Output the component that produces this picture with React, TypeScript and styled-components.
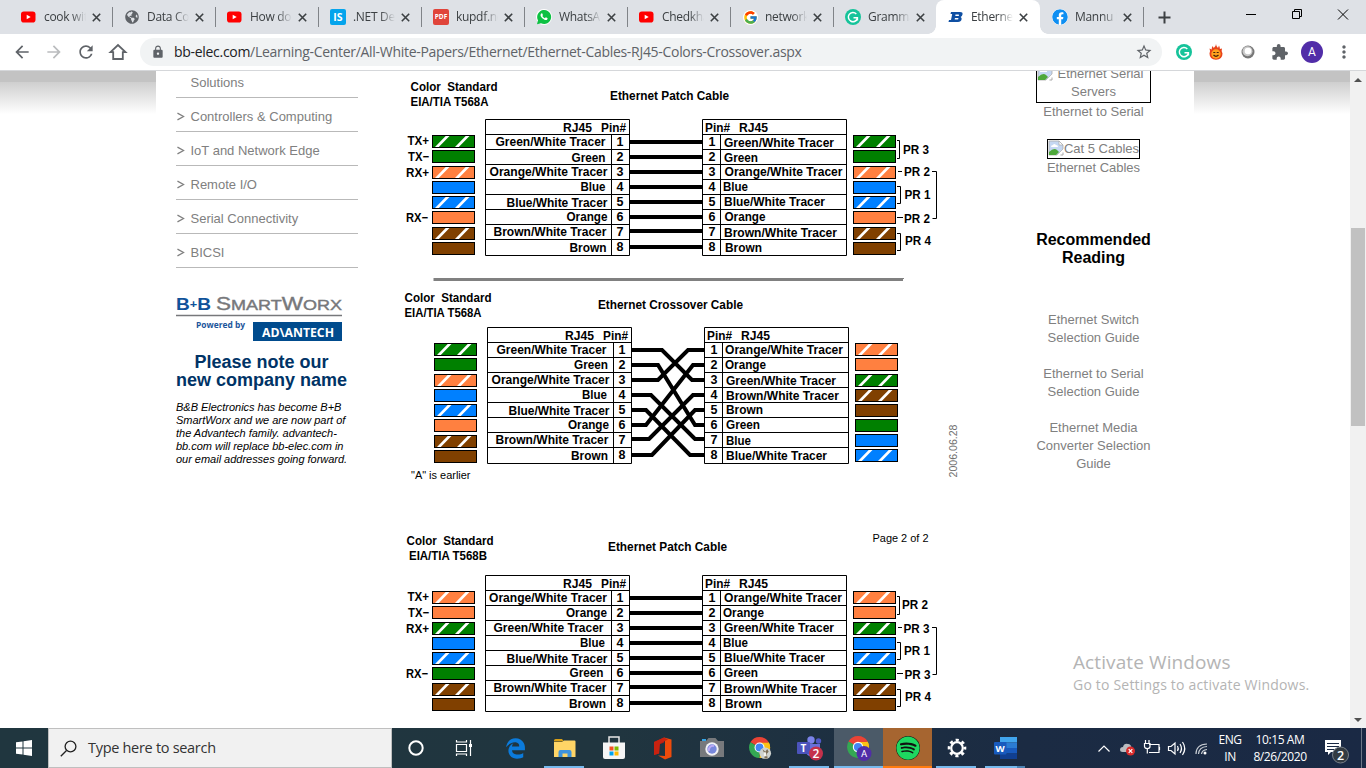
import React from "react";
import styled, { createGlobalStyle, css } from "styled-components";
import { MdLock, MdStarBorder, MdRefresh, MdArrowBack, MdArrowForward, MdMoreVert } from "react-icons/md";
import { FaFacebook, FaEdgeLegacy, FaSpotify, FaGlobeAmericas } from "react-icons/fa";
import { FcGoogle } from "react-icons/fc";

const Global = createGlobalStyle`
  * { box-sizing: border-box; }
  body { margin: 0; overflow: hidden; }
`;

const UI = `"Open Sans", "Noto Sans", sans-serif`;
const ARIAL = `"Liberation Sans", Arial, sans-serif`;

const Screen = styled.div`
  width: 1366px;
  height: 768px;
  display: flex;
  flex-direction: column;
  background: #fff;
  overflow: hidden;
  position: relative;
`;

/* ---------- browser tabs ---------- */

const TabStrip = styled.div`
  height: 34px;
  flex: none;
  background: #dee1e6;
  display: flex;
  padding-left: 9px;
`;

const TabItem = styled.div<{ $active?: boolean; $line?: boolean }>`
  width: 103px;
  height: 34px;
  flex: none;
  display: flex;
  align-items: center;
  padding: 0 0 0 12px;
  position: relative;
  ${(p) =>
    p.$active &&
    css`
      background: #fff;
      border-radius: 8px 8px 0 0;
      width: 104px;
      &::before,
      &::after {
        content: "";
        position: absolute;
        bottom: 0;
        width: 8px;
        height: 8px;
      }
      &::before {
        left: -8px;
        background: radial-gradient(circle at 0 0, transparent 7.5px, #fff 8px);
      }
      &::after {
        right: -8px;
        background: radial-gradient(circle at 100% 0, transparent 7.5px, #fff 8px);
      }
    `}
  ${(p) =>
    p.$line &&
    css`
      &::after {
        content: "";
        position: absolute;
        right: -1px;
        top: 7px;
        width: 1px;
        height: 20px;
        background: #808388;
      }
    `}
`;

const Favicon = styled.span`
  width: 16px;
  height: 16px;
  display: flex;
  align-items: center;
  justify-content: center;
  margin-right: 7px;
  flex: none;
`;

const TabTitle = styled.span`
  width: 42px;
  overflow: hidden;
  white-space: nowrap;
  font: 12px/18px ${UI};
  letter-spacing: -0.3px;
  color: #3c4043;
  mask-image: linear-gradient(90deg, #000 65%, transparent 100%);
`;

const CloseMark = styled.svg`
  width: 9px;
  height: 9px;
  margin-left: 6px;
  flex: none;
`;

const NewTab = styled.svg`
  width: 13px;
  height: 13px;
  margin: 11px 0 0 15px;
`;

const WindowButtons = styled.svg`
  width: 130px;
  height: 34px;
  margin-left: auto;
`;

/* ---------- toolbar ---------- */

const Toolbar = styled.div`
  height: 37px;
  flex: none;
  border-bottom: 1px solid #d5d7da;
  display: flex;
  align-items: center;
  padding-left: 12px;
  color: #5f6368;
`;

const NavButton = styled.span<{ $dim?: boolean }>`
  width: 20px;
  height: 20px;
  margin-right: 12px;
  font-size: 20px;
  display: flex;
  color: ${(p) => (p.$dim ? "#babcbe" : "#5f6368")};
`;

const AddressBar = styled.div`
  width: 1022px;
  height: 28px;
  border-radius: 14px;
  background: #f1f3f4;
  display: flex;
  align-items: center;
  padding: 0 9px 0 11px;
  font-size: 14px;
`;

const Url = styled.span`
  margin-left: 9px;
  font: 14px/20px ${UI};
  letter-spacing: -0.3px;
  color: #5f6368;
  white-space: nowrap;
  b {
    font-weight: 400;
    color: #202124;
  }
`;

const StarSlot = styled.span`
  margin-left: auto;
  font-size: 18px;
  display: flex;
`;

const Extensions = styled.div`
  display: flex;
  align-items: center;
  margin-left: 14px;
  gap: 16px;
`;

const Slot = styled.span`
  width: 16px;
  height: 16px;
  display: flex;
  align-items: center;
  justify-content: center;
  font-size: 18px;
`;

const Avatar = styled.span`
  width: 22px;
  height: 22px;
  margin: 0 -3px 0 -3px;
  border-radius: 50%;
  background: #512da8;
  color: #fff;
  font: 12px/22px Roboto, sans-serif;
  text-align: center;
`;

/* ---------- web page ---------- */

const Viewport = styled.div`
  height: 657px;
  flex: none;
  display: flex;
  overflow: hidden;
`;

const PageEdge = styled.div`
  width: 156px;
  background: linear-gradient(#c3c3c3 0, #c3c3c3 11px, #cfcfcf 11px, #fff 43px);
`;

const PageBody = styled.main`
  width: 1038px;
  display: flex;
  padding-left: 20px;
  font-family: ${ARIAL};
`;

const Sidebar = styled.nav`
  width: 182px;
  margin-right: 42px;
  flex: none;
`;

const MenuRow = styled.div<{ $first?: boolean }>`
  height: ${(p) => (p.$first ? 27 : 34)}px;
  border-bottom: 1px solid #b9b9b9;
  display: flex;
  align-items: flex-end;
  padding: 0 0 5px ${(p) => (p.$first ? 14.5 : 0)}px;
  font-size: 13px;
  line-height: 18px;
  color: #808080;
  svg {
    width: 14.5px;
    height: 18px;
    flex: none;
  }
`;

const Logo = styled.svg`
  display: block;
  width: 167px;
  height: 48px;
  margin-top: 27px;
`;

const Notice = styled.h2`
  margin: 10px 0 0;
  width: 171px;
  font: bold 18px/18px ${ARIAL};
  text-align: center;
  white-space: nowrap;
  color: #003366;
`;

const NoticeText = styled.p`
  margin: 12px 0 0;
  font: italic 11px/13px ${ARIAL};
  letter-spacing: -0.02px;
  color: #000;
  white-space: nowrap;
`;

const Figure = styled.svg`
  width: 560px;
  height: 657px;
  flex: none;
  display: block;
  margin-right: 76px;
`;

const Related = styled.aside`
  width: 115px;
  flex: none;
  font-size: 13px;
  line-height: 18px;
  text-align: center;
  color: #808080;
  p {
    margin: 0;
    white-space: nowrap;
  }
`;

const ClippedTop = styled.div`
  height: 32px;
  display: flex;
  flex-direction: column;
  justify-content: flex-end;
  overflow: hidden;
`;

const MissingImage = styled.span<{ $tight?: boolean }>`
  display: inline-block;
  flex: none;
  border: 1px solid #000;
  white-space: nowrap;
  padding-bottom: ${(p) => (p.$tight ? 0 : 1)}px;
  svg {
    width: 16px;
    height: 16px;
    margin-right: ${(p) => (p.$tight ? 0 : 5)}px;
    margin-left: ${(p) => (p.$tight ? 0 : -7)}px;
    vertical-align: -3px;
  }
`;

const RelatedGap = styled.div<{ $h: number }>`
  height: ${(p) => p.$h}px;
`;

const RelatedTitle = styled.h3`
  margin: 0;
  font: bold 16px/18px ${ARIAL};
  color: #000;
`;

const Scrollbar = styled.div`
  width: 16px;
  background: #f1f1f1;
  display: flex;
  flex-direction: column;
  svg {
    width: 16px;
    height: 17px;
  }
`;

const ScrollThumb = styled.div`
  width: 14px;
  height: 198px;
  margin: 140px 0 auto 1px;
  background: #c1c1c1;
`;

const Watermark = styled.div`
  position: absolute;
  left: 1073px;
  top: 649px;
  font-family: ${UI};
  color: #b4b4b4;
  white-space: nowrap;
`;

const WatermarkTitle = styled.div`
  font-size: 19px;
  line-height: 26px;
  letter-spacing: 0.1px;
`;

const WatermarkText = styled.div`
  font-size: 14px;
  line-height: 20px;
  letter-spacing: 0.2px;
`;

/* ---------- taskbar ---------- */

const Taskbar = styled.div`
  height: 40px;
  flex: none;
  display: flex;
  background: linear-gradient(90deg, #20363f 0, #20353f 45%, #1b2b43 75%, #1a2944 100%);
  color: #fff;
`;

const StartCell = styled.div`
  width: 48px;
  display: flex;
  align-items: center;
  justify-content: center;
`;

const SearchBox = styled.div`
  width: 344px;
  border: 1px solid #bfbfbf;
  background: #f1f1f1;
  display: flex;
  align-items: center;
  padding-left: 11px;
  gap: 11px;
  font: 14.5px/20px ${UI};
  letter-spacing: -0.3px;
  color: #333;
`;

const AppCell = styled.div<{ $bg?: string; $bar?: string; $full?: boolean; $w?: number; $gap?: number }>`
  width: ${(p) => p.$w || 49}px;
  margin-right: ${(p) => p.$gap || 0}px;
  display: flex;
  align-items: center;
  justify-content: center;
  position: relative;
  background: ${(p) => p.$bg || "transparent"};
  &::after {
    content: "";
    position: absolute;
    bottom: 0;
    left: ${(p) => (p.$full ? 0 : 4)}px;
    right: ${(p) => (p.$full ? 0 : 5)}px;
    height: 2px;
    background: ${(p) => p.$bar || "transparent"};
  }
`;

const Tray = styled.svg`
  width: 118px;
  height: 40px;
  margin-left: auto;
`;

const Stack = styled.div<{ $w: number }>`
  width: ${(p) => p.$w}px;
  text-align: center;
  font: 12px/17px ${UI};
  letter-spacing: -0.4px;
  padding-top: 3px;
  white-space: nowrap;
`;

const ActionCenter = styled.svg`
  width: 53px;
  height: 40px;
`;

/* ---------- wiring diagrams ---------- */

const palette: Record<string, string> = {
  Green: "#008000",
  Orange: "#ff8040",
  Blue: "#0080ff",
  Brown: "#804000",
};

const lengths: Record<string, number> = {
  "Green/White Tracer": 110,
  Green: 34,
  "Orange/White Tracer": 118,
  Orange: 41,
  "Blue/White Tracer": 101,
  Blue: 25,
  "Brown/White Tracer": 113,
  Brown: 37,
};

type Pin = [label: string, x: number, baseline: number];

const Fit = ({ x, y, w, children, end }: { x: number; y: number; w: number; children: string; end?: boolean }) => (
  <text x={(end ? x - w : x) - 0.5} y={y} textLength={w} lengthAdjust="spacingAndGlyphs" xmlSpace="preserve">
    {children}
  </text>
);

const swatchY = [135.5, 150.5, 166.5, 181.5, 196.5, 211.5, 227.5, 242.5];
const wireY = [142, 157, 172, 187, 202, 217, 231, 247];
const digitY = [146, 161, 176, 191, 206, 221, 236, 251];

const Swatch = ({ x, y, label }: { x: number; y: number; label: string }) => (
  <g>
    <rect x={x} y={y} width={42} height={12} fill={palette[label.split("/")[0]]} stroke="#000" />
    {label.includes("/") && (
      <path
        d={`M${x + 2.5} ${y + 11.5}h3.8l10.700-11h-3.800zM${x + 22.5} ${y + 11.5}h3.800l10.700-11h-3.800z`}
        fill="#fff"
      />
    )}
  </g>
);

const Connector = ({ dx, dy, left, right }: { dx: number; dy: number; left: Pin[]; right: Pin[] }) => (
  <g>
    <g transform={`translate(${dx} ${dy})`}>
      <path
        fill="none"
        stroke="#000"
        d={`M485.5 119.5h144v136h-144zM702.5 119.5h144v136h-144zM611.5 134.5v121M720.5 134.5v121${[0, 1, 2, 3, 4, 5, 6, 7]
          .map((i) => `M485.5 ${134.5 + i * 15}h144M702.5 ${134.5 + i * 15}h144`)
          .join("")}`}
      />
      <Fit x={563.5} y={132} w={29}>RJ45</Fit>
      <Fit x={601.5} y={132} w={25}>Pin#</Fit>
      <Fit x={705.5} y={132} w={25}>Pin#</Fit>
      <Fit x={739.5} y={132} w={29}>RJ45</Fit>
      {digitY.map((y, i) => (
        <g key={i} textAnchor="middle">
          <text x={620} y={y}>{i + 1}</text>
          <text x={712} y={y}>{i + 1}</text>
        </g>
      ))}
      {left.map(([label], i) => (
        <Swatch key={i} x={432.5} y={swatchY[i]} label={label} />
      ))}
      {right.map(([label], i) => (
        <Swatch key={i} x={853.5} y={swatchY[i] - (dx && i > 5 ? 1 : 0)} label={label} />
      ))}
    </g>
    {left.map(([label, x, y], i) => (
      <Fit key={i} x={x} y={y} w={lengths[label]} end>{label}</Fit>
    ))}
    {right.map(([label, x, y], i) => (
      <Fit key={i} x={x} y={y} w={lengths[label]}>{label}</Fit>
    ))}
  </g>
);

const PatchExtras = ({ dy, pairs }: { dy: number; pairs: [string, number, number][] }) => (
  <g transform={`translate(0 ${dy})`}>
    <path stroke="#000" strokeWidth={4} d={wireY.map((y) => `M630 ${y}h72`).join("")} />
    <Fit x={408} y={145} w={21.5}>TX+</Fit>
    <Fit x={408.5} y={161} w={21}>TX−</Fit>
    <Fit x={406.5} y={177} w={23}>RX+</Fit>
    <Fit x={406.5} y={222} w={22}>RX−</Fit>
    {pairs.map(([t, x, y], i) => (
      <Fit key={i} x={x} y={y} w={26}>{t}</Fit>
    ))}
    <path
      fill="none"
      stroke="#000"
      d="M897 140.5h2.5v18h-2.5M897 186.5h3.5v17h-3.5M897 233.5h3.5v17h-3.5M898 171.5h4M897 217.5h6M932 171.5h4.5v47h-4"
    />
  </g>
);

const G = "Green/White Tracer";
const O = "Orange/White Tracer";
const B = "Blue/White Tracer";
const N = "Brown/White Tracer";

const WiringDiagrams = () => (
  <Figure viewBox="400 71 560 657" fontFamily={ARIAL} fontSize={12.5} fontWeight={700}>
    <Fit x={411} y={91} w={87}>{"Color  Standard"}</Fit>
    <Fit x={411} y={106} w={78}>EIA/TIA T568A</Fit>
    <Fit x={610.5} y={100} w={119}>Ethernet Patch Cable</Fit>
    <Connector
      dx={0}
      dy={0}
      left={[[G, 606, 146], ["Green", 606, 162], [O, 608, 176], ["Blue", 606, 191], [B, 608, 207], ["Orange", 608, 221], [N, 607, 236], ["Brown", 607, 252]]}
      right={[[G, 724.5, 147], ["Green", 724.5, 162], [O, 725, 176], ["Blue", 723.5, 191], [B, 724.5, 206], ["Orange", 725, 221], [N, 724.5, 237], ["Brown", 725.5, 252]]}
    />
    <PatchExtras dy={0} pairs={[["PR 3", 903.5, 154], ["PR 2", 904.5, 176], ["PR 1", 905, 199], ["PR 2", 904.5, 223], ["PR 4", 905.5, 245]]} />
    <path d="M433.500 279.500h469.500" stroke="#808080" strokeWidth={3} />
    <path d="M903 278.500h1" stroke="#808080" />

    <Fit x={405} y={302} w={87}>{"Color  Standard"}</Fit>
    <Fit x={405} y={317} w={77}>EIA/TIA T568A</Fit>
    <Fit x={598.5} y={309} w={145}>Ethernet Crossover Cable</Fit>
    <Connector
      dx={2}
      dy={208}
      left={[[G, 607, 354], ["Green", 608.5, 369], [O, 610, 384], ["Blue", 607.5, 399], [B, 610, 415], ["Orange", 609.5, 429], [N, 609, 444], ["Brown", 608.5, 460]]}
      right={[[O, 725.5, 354], ["Orange", 725.5, 369], [G, 726.5, 385], [N, 726.5, 400], ["Brown", 726.5, 414], ["Green", 726.5, 429], ["Blue", 726.5, 445], [B, 726.5, 460]]}
    />
    <path
      fill="none"
      stroke="#000"
      strokeWidth={4}
      d="M632 350H662L692 380H704M632 365H658L695 425H704M632 380H658L688 350H704M632 395H651L695 439H704M632 410H646L690 455H704M632 425H646L693 365H704M632 439H649L693 395H704M632 455H652L695 410H704"
    />
    <g fontWeight={400} fontSize={11}>
      <Fit x={411.5} y={479} w={59.5}>"A" is earlier</Fit>
      <Fit x={873} y={542} w={56}>Page 2 of 2</Fit>
      <g transform="translate(957 477) rotate(-90)" fill="#707070">
        <Fit x={0} y={0} w={53}>2006.06.28</Fit>
      </g>
    </g>

    <Fit x={407} y={545} w={87}>{"Color  Standard"}</Fit>
    <Fit x={409.5} y={560} w={78}>EIA/TIA T568B</Fit>
    <Fit x={608.5} y={551} w={119}>Ethernet Patch Cable</Fit>
    <Connector
      dx={0}
      dy={456}
      left={[[O, 607.5, 602], ["Orange", 607.5, 617], [G, 604, 632], ["Blue", 605.5, 647], [B, 608, 663], ["Green", 604, 677], [N, 607, 692], ["Brown", 606.5, 708]]}
      right={[[O, 724.5, 602], ["Orange", 723.5, 617], [G, 724.5, 632], ["Blue", 723.5, 647], [B, 724.5, 662], ["Green", 724.5, 677], [N, 724.5, 693], ["Brown", 725.5, 708]]}
    />
    <PatchExtras dy={456} pairs={[["PR 2", 902.5, 153], ["PR 3", 904, 177], ["PR 1", 904.5, 199], ["PR 3", 905, 223], ["PR 4", 905.5, 245]]} />
  </Figure>
);

/* ---------- icons ---------- */

const YouTube = () => (
  <svg width="16" height="16" viewBox="0 0 16 16">
    <rect x="0" y="2.5" width="14.5" height="11" rx="2.8" fill="#f00" />
    <path d="M5.700 5.700v4.600l4-2.300z" fill="#fff" />
  </svg>
);

const GrammarlyG = () => (
  <svg width="16" height="16" viewBox="0 0 16 16">
    <circle cx="8" cy="8" r="8" fill="#15c39a" />
    <path d="M11.3 4.9A4.6 4.6 0 1 0 12.4 9.2M8.5 8.7h3.9v2.8" fill="none" stroke="#fff" strokeWidth="1.5" />
  </svg>
);

const TileIcon = ({ color, children, size }: { color: string; children: string; size: number }) => (
  <svg width="16" height="16" viewBox="0 0 16 16">
    <rect width="16" height="16" rx="2" fill={color} />
    <text x="8" y={8 + size * 0.36} fontSize={size} textAnchor="middle" fill="#fff" fontFamily={UI} fontWeight="700">
      {children}
    </text>
  </svg>
);

const BbIcon = () => (
  <svg width="16" height="16" viewBox="0 0 16 16">
    <path fillRule="evenodd" fill="#0f4fa3" d="M3 3h9q3 0 2.500 2.400Q14.200 7.200 12.600 7.900 14 8.700 13.600 10.300 13 13 10 13H.5l.5-2H3l1.200-6H2.500zM7.500 5.500 7.300 6.900h3q.7 0 .8-.7t-.7-.7zM6.900 9.100 6.700 10.500h3q.7 0 .8-.7t-.7-.7z" />
  </svg>
);

const WhatsApp = () => (
  <svg width="16" height="16" viewBox="0 0 16 16">
    <circle cx="8" cy="8" r="8" fill="#fff" />
    <path d="M1 15.200 2 11.300A7 7 0 1 1 5 14.200z" fill="#0dc143" />
    <path d="M5.300 4.500q.6-.5 1 .1l.6 1.300q.1.400-.6 1.200.8 1.500 2.500 2.200l.8-.9q.3-.3 1.700.6.600.3.100 1.200-.9 1.200-2.500.7Q5.700 9.900 4.600 7.100 4.300 5.400 5.300 4.500z" fill="#fff" />
  </svg>
);

const Chrome = ({ size = 22, badge }: { size?: number; badge: "A" | "photo" }) => (
  <svg width={size + 4} height={size + 4} viewBox="0 0 26 26">
    <path d="M12 12 2.500 6.600A11 11 0 0 1 21.600 6.600z" fill="#ea4335" />
    <path d="M12 12 21.600 6.600A11 11 0 0 1 12 23z" fill="#fbbc05" />
    <path d="M12 12V23A11 11 0 0 1 2.500 6.600z" fill="#34a853" />
    <path d="M12 7h9.800A11 11 0 0 1 12 23l4-9z" fill="#fbc116" />
    <circle cx="12" cy="12" r="5.200" fill="#fff" />
    <circle cx="12" cy="12" r="4.100" fill="#4285f4" />
    {badge === "A" ? (
      <>
        <circle cx="18" cy="18.500" r="7.500" fill="#512da8" />
        <text x="18" y="22" fontSize="9.500" textAnchor="middle" fill="#fff" fontFamily="Roboto, sans-serif">A</text>
      </>
    ) : (
      <>
        <circle cx="18" cy="18" r="6" fill="#cfd3cf" />
        <path d="M15 13.500l3 3 2-3 1.500 3-2 2 1 5h-3.500l.5-4z" fill="#7d6f58" />
        <path d="M16.500 17h2l1 4h-3z" fill="#f4f4ef" />
      </>
    )}
  </svg>
);

const Broken = () => (
  <svg viewBox="0 0 16 16">
    <path d="M1 1h10l4 4v4l-6 6H1z" fill="#c5d7f2" stroke="#a9a9a9" strokeWidth=".8" />
    <path d="M3 7q0-2 2-2 1-2 3 0 2 0 2 2z" fill="#fff" />
    <path d="M1 15v-3q5-5 8-2l2 2-3 3z" fill="#4ea83a" />
    <path d="M9 15.500 15.500 9v6.500z" fill="#fff" />
    <path d="M12.500 15H15v-2.500" fill="none" stroke="#a9a9a9" />
    <path d="M11 1v4h4z" fill="#fff" stroke="#a9a9a9" strokeWidth=".7" />
  </svg>
);

const tabs: { title: string; icon: React.ReactNode; active?: boolean }[] = [
  { title: "cook with", icon: <YouTube /> },
  { title: "Data Comm", icon: <FaGlobeAmericas size={14} color="#5f6368" /> },
  { title: "How does", icon: <YouTube /> },
  { title: ".NET Dev", icon: <TileIcon color="#04a4ec" size={10.5}>IS</TileIcon> },
  { title: "kupdf.net", icon: <TileIcon color="#e0443a" size={6.5}>PDF</TileIcon> },
  { title: "WhatsApp", icon: <WhatsApp /> },
  { title: "Chedkhani", icon: <YouTube /> },
  { title: "network", icon: <FcGoogle size={15} style={{ background: "#fff", borderRadius: 8 }} /> },
  { title: "Grammarly", icon: <GrammarlyG /> },
  { title: "Ethernet", icon: <BbIcon />, active: true },
  { title: "Mannu K", icon: <FaFacebook size={16} color="#0f8ff2" style={{ background: "#fff", borderRadius: 8 }} /> },
];

const menu = ["Controllers & Computing", "IoT and Network Edge", "Remote I/O", "Serial Connectivity", "BICSI"];

const BLUE = "#76b9ed";

export default function App() {
  return (
    <Screen>
      <Global />
      <TabStrip>
        {tabs.map((t, i) => (
          <TabItem key={i} $active={t.active} $line={i !== 8 && i !== 9}>
            <Favicon>{t.icon}</Favicon>
            <TabTitle>{t.title}</TabTitle>
            <CloseMark viewBox="0 0 9 9">
              <path d="M.8.8 8.200 8.200M8.200.8.8 8.200" stroke="#3c4043" strokeWidth="1.600" />
            </CloseMark>
          </TabItem>
        ))}
        <NewTab viewBox="0 0 13 13">
          <path d="M6.500.5v12M.5 6.500h12" stroke="#3c4043" strokeWidth="2" />
        </NewTab>
        <WindowButtons viewBox="1236 0 130 34" fill="none" stroke="#000">
          <path d="M1246 14.500h10" />
          <path d="M1292.500 11.500h7v7h-7zM1294.500 11.500v-2h7v7h-2" />
          <path d="M1338 9.500l10 10M1348 9.500l-10 10" />
        </WindowButtons>
      </TabStrip>

      <Toolbar>
        <NavButton><MdArrowBack /></NavButton>
        <NavButton $dim><MdArrowForward /></NavButton>
        <NavButton><MdRefresh /></NavButton>
        <NavButton>
          <svg width="20" height="20" viewBox="0 0 20 20">
            <path d="M2.500 10.200 10 3l7.500 7.200h-2.700V17H5.200v-6.800z" fill="none" stroke="#5f6368" strokeWidth="1.800" />
          </svg>
        </NavButton>
        <AddressBar>
          <MdLock />
          <Url><b>bb-elec.com</b>/Learning-Center/All-White-Papers/Ethernet/Ethernet-Cables-RJ45-Colors-Crossover.aspx</Url>
          <StarSlot><MdStarBorder /></StarSlot>
        </AddressBar>
        <Extensions>
          <Slot><GrammarlyG /></Slot>
          <Slot>
            <svg width="14" height="16" viewBox="0 0 14 16">
              <path d="M7 0q.2 2.500 2 4l1-2.500q1 2 .9 3.500L13 4.500q-1 2.500.5 5Q13.500 15.500 7 15.700.5 15.500.5 9.500q1.200-2 0-5l2.200 1q-.2-2 1-3.500l1 2Q7 2.500 7 0z" fill="#e8431a" />
              <circle cx="7" cy="10" r="4.700" fill="#ffa21f" />
              <path d="M4.300 8.500h2M7.700 8.500h2M4.500 11q2.500 2.600 5 0" stroke="#44210c" strokeWidth="1.200" fill="none" />
            </svg>
          </Slot>
          <Slot>
            <svg width="14" height="14" viewBox="0 0 14 14">
              <circle cx="7" cy="7" r="6.500" fill="#777" />
              <circle cx="6.500" cy="6.300" r="5" fill="#c9c9c9" />
              <circle cx="7" cy="6" r="3.300" fill="#fff" />
            </svg>
          </Slot>
          <Slot>
            <svg width="16" height="16" viewBox="1.500 1 21.500 21.500">
              <path fill="#5f6368" d="M20.500 11H19V7c0-1.100-.9-2-2-2h-4V3.500C13 2.120 11.880 1 10.500 1S8 2.120 8 3.500V5H4c-1.100 0-1.990.9-1.990 2v3.800H3.500c1.490 0 2.700 1.210 2.700 2.700s-1.210 2.700-2.700 2.700H2V20c0 1.100.9 2 2 2h3.800v-1.500c0-1.490 1.210-2.700 2.700-2.700 1.490 0 2.700 1.210 2.700 2.700V22H17c1.100 0 2-.9 2-2v-4h1.500c1.380 0 2.500-1.120 2.500-2.500S21.880 11 20.500 11z" />
            </svg>
          </Slot>
          <Avatar>A</Avatar>
          <Slot><MdMoreVert size={20} style={{ flex: "none" }} /></Slot>
        </Extensions>
      </Toolbar>

      <Viewport>
        <PageEdge />
        <PageBody>
          <Sidebar>
            <MenuRow $first>Solutions</MenuRow>
            {menu.map((m) => (
              <MenuRow key={m}>
                <svg viewBox="0 0 15 18">
                  <path d="M1.500 5 7.800 8.500l-6.300 3.500" fill="none" stroke="#808080" strokeWidth="1.300" />
                </svg>
                {m}
              </MenuRow>
            ))}
            <Logo viewBox="0 0 167 48" fontFamily={ARIAL}>
              <text x="0" y="15" fontSize="16.500" fontWeight="700" fill="#10529a" textLength="35" lengthAdjust="spacingAndGlyphs">B<tspan fontSize="11" dy="-2">+</tspan><tspan dy="2">B</tspan></text>
              <text x="40" y="15" fontSize="17.500" fill="#77787b" stroke="#77787b" strokeWidth=".4" textLength="126" lengthAdjust="spacingAndGlyphs">S<tspan fontSize="14">MART</tspan>W<tspan fontSize="14">ORX</tspan></text>
              <path d="M0 20.500h166" stroke="#77787b" strokeWidth="1.500" />
              <text x="20" y="33" fontSize="9" fontWeight="700" fill="#1c559b" fontFamily={UI} textLength="49" lengthAdjust="spacingAndGlyphs">Powered by</text>
              <rect x="77" y="27" width="89" height="19" fill="#004b8d" />
              <text x="86" y="42" fontSize="13" fontWeight="700" fill="#fff" fontFamily={UI} textLength="72" lengthAdjust="spacingAndGlyphs">AD\ANTECH</text>
            </Logo>
            <Notice>Please note our<br />new company name</Notice>
            <NoticeText>
              B&amp;B Electronics has become B+B<br />
              SmartWorx and we are now part of<br />
              the Advantech family. advantech-<br />
              bb.com will replace bb-elec.com in<br />
              our email addresses going forward.
            </NoticeText>
          </Sidebar>

          <WiringDiagrams />

          <Related>
            <ClippedTop>
              <MissingImage><Broken />Ethernet Serial<br />Servers</MissingImage>
            </ClippedTop>
            <p>Ethernet to Serial</p>
            <RelatedGap $h={18} />
            <MissingImage $tight><Broken />Cat 5 Cables</MissingImage>
            <p>Ethernet Cables</p>
            <RelatedGap $h={54} />
            <RelatedTitle>Recommended Reading</RelatedTitle>
            <RelatedGap $h={44} />
            <p>Ethernet Switch<br />Selection Guide</p>
            <RelatedGap $h={18} />
            <p>Ethernet to Serial<br />Selection Guide</p>
            <RelatedGap $h={18} />
            <p>Ethernet Media<br />Converter Selection<br />Guide</p>
          </Related>
        </PageBody>
        <PageEdge />
        <Scrollbar>
          <svg viewBox="0 0 16 17"><path d="M4 11h8L8 7z" fill="#505050" /></svg>
          <ScrollThumb />
          <svg viewBox="0 0 16 17"><path d="M4 7h8l-4 4z" fill="#505050" /></svg>
        </Scrollbar>
      </Viewport>

      <Watermark>
        <WatermarkTitle>Activate Windows</WatermarkTitle>
        <WatermarkText>Go to Settings to activate Windows.</WatermarkText>
      </Watermark>

      <Taskbar>
        <StartCell>
          <svg width="16" height="16" viewBox="0 0 16 16">
            <path d="M0 2.300 6.500 1.400V7.500H0zM7.500 1.300 16 0V7.500H7.500zM0 8.500H6.500V14.600L0 13.700zM7.500 8.500H16V16L7.500 14.800z" fill="#fff" />
          </svg>
        </StartCell>
        <SearchBox>
          <svg width="17" height="17" viewBox="0 0 17 17">
            <path d="M6.500 10.500.8 16.200" stroke="#222" strokeWidth="1.300" />
            <circle cx="10.500" cy="6.500" r="5.400" fill="none" stroke="#222" strokeWidth="1.300" />
          </svg>
          Type here to search
        </SearchBox>
        <AppCell $w={47}>
          <svg width="18" height="18" viewBox="0 0 18 18"><circle cx="9" cy="9" r="6.700" fill="none" stroke="#fff" strokeWidth="2" /></svg>
        </AppCell>
        <AppCell $gap={3}>
          <svg width="18" height="18" viewBox="0 0 18 18" fill="none" stroke="#fff" strokeWidth="1.200">
            <path d="M1.500 5.500h10v7h-10zM1.500 1v2h10V1M1.500 17v-2h10v2M15.500 1v16" />
            <path d="M14 6.500h3" strokeWidth="3" />
          </svg>
        </AppCell>
        <AppCell><FaEdgeLegacy size={21} color="#0b7bdc" /></AppCell>
        <AppCell $bar={BLUE}>
          <svg width="22" height="19" viewBox="0 0 22 19">
            <path d="M0 1.500Q0 0 1.500 0H8l2 2.500H0z" fill="#d9a017" />
            <path d="M0 3h8l2-1.500h10.500q1 0 1 1V18H0z" fill="#ffd566" />
            <path d="M4.500 18v-5q0-2 2-2h9q2 0 2 2v5h-4v-3.500h-5V18z" fill="#3f93dc" />
          </svg>
        </AppCell>
        <AppCell>
          <svg width="22" height="24" viewBox="0 0 22 24">
            <path d="M6 7V1h10v6" fill="none" stroke="#e8e8e8" strokeWidth="1.500" />
            <path d="M0 6.500h22V21q0 2-2 2H2q-2 0-2-2z" fill="#f5f5f5" />
            <path d="M6.500 10.500h4v4h-4z" fill="#f25022" /><path d="M11.500 10.500h4v4h-4z" fill="#7fba00" />
            <path d="M6.500 15.500h4v4h-4z" fill="#00a4ef" /><path d="M11.500 15.500h4v4h-4z" fill="#ffb900" />
          </svg>
        </AppCell>
        <AppCell>
          <svg width="20" height="23" viewBox="0 0 20 23">
            <path d="M1 5 11 .5v5L6 7.500v9L1 18z" fill="#b51c12" />
            <path d="M11 .5 18.500 2.500v17.500L12 22.500 5 18.500l7 .5V4z" fill="#ee4b0b" />
            <path d="M1 5 11 .5l4 2-8 4-.8 10L1 18z" fill="#c92210" />
          </svg>
        </AppCell>
        <AppCell>
          <svg width="24" height="20" viewBox="0 0 24 20">
            <path d="M2 1h4v2H2z" fill="#35a6e8" />
            <path d="M8.500 0h7L18 3h6v16H0V3h6z" fill="#77797c" />
            <circle cx="12" cy="11" r="6.700" fill="#f1f1f4" />
            <circle cx="12" cy="11" r="4.700" fill="#7888dc" />
            <path d="M9 13a4 4 0 0 1 5-5" fill="none" stroke="#bcabf4" strokeWidth="2" />
          </svg>
        </AppCell>
        <AppCell><Chrome badge="photo" size={21} /></AppCell>
        <AppCell $bar={BLUE}>
          <svg width="26" height="26" viewBox="0 0 26 26">
            <circle cx="14" cy="5" r="3.700" fill="#7b83eb" /><circle cx="21.500" cy="6" r="2.700" fill="#5059c9" />
            <path d="M7 9h16v8q0 5-6 5t-8-4z" fill="#6870db" />
            <rect x="0" y="7" width="13" height="12" rx="1" fill="#4b53bc" />
            <text x="6.500" y="16.500" fontSize="10" fontWeight="700" textAnchor="middle" fill="#fff" fontFamily={UI}>T</text>
            <circle cx="19" cy="18.500" r="7" fill="#c4314b" />
            <text x="19" y="22.800" fontSize="12" fontWeight="600" textAnchor="middle" fill="#fff" fontFamily={UI}>2</text>
          </svg>
        </AppCell>
        <AppCell $bg="#4b5a68" $bar={BLUE} $full><Chrome badge="A" /></AppCell>
        <AppCell $bg="#a66530" $bar="#ff7b0f" $full>
          <FaSpotify size={24} color="#1ed760" style={{ background: "#111", borderRadius: 12 }} />
        </AppCell>
        <AppCell $bar={BLUE}>
          <svg width="20" height="20" viewBox="0 0 20 20" fill="none" stroke="#fff">
            <circle cx="10" cy="10" r="5.800" strokeWidth="2.200" />
            <circle cx="10" cy="10" r="8" strokeWidth="2.600" strokeDasharray="3.140 3.140" strokeDashoffset="1.570" />
          </svg>
        </AppCell>
        <AppCell $bar={`linear-gradient(90deg, ${BLUE} 32px, #4d83b3 32px)`}>
          <svg width="24" height="22" viewBox="0 0 24 22">
            <path d="M6 0h17v5.500H6z" fill="#41a5ee" /><path d="M6 5.500h17V11H6z" fill="#2b7cd3" />
            <path d="M6 11h17v5.500H6z" fill="#185abd" /><path d="M6 16.500h17V22H6z" fill="#103f91" />
            <rect x="0" y="5" width="12.500" height="12.500" rx="1" fill="#185abd" />
            <text x="6.200" y="14.800" fontSize="9.500" fontWeight="700" textAnchor="middle" fill="#fff" fontFamily={UI}>W</text>
          </svg>
        </AppCell>
        <Tray viewBox="1096 728 118 40" fill="none" stroke="#fff" strokeWidth="1.200">
          <path d="M1099.500 751.500l5.500-5.500 5.500 5.500" />
          <path d="M1121 750q0-3 3-3 1-4 5-3 3 0 3.500 4 2 1 1 4h-10q-2.500 0-2.500-2z" fill="#b9bcc0" stroke="none" />
          <circle cx="1131.500" cy="751" r="4.500" fill="#d92b2b" stroke="none" />
          <path d="M1129.700 749.200l3.600 3.600M1133.300 749.200l-3.600 3.600" />
          <path d="M1150 744.500h10v8h-10M1160.500 747v3M1146.500 743v-3M1150 743v-3M1145.500 743.500h5.500v3q0 2-2.700 2t-2.800-2zM1148.300 748.500v5" />
          <path d="M1169.500 746.500h2.500l4-3.500v11l-4-3.500h-2.500zM1178.500 746q1.500 2.500 0 5M1181 744q3 4.500 0 9M1183.500 742q4.500 6.500 0 13" />
          <path d="M1197 754q0-9.500 11-10M1199.500 754q.5-7 8.500-7.500M1202.500 754q.5-4 5.500-4.500" stroke="#c9ced4" />
          <circle cx="1206" cy="753" r="1.500" fill="#fff" stroke="none" />
        </Tray>
        <Stack $w={34}>ENG<br />IN</Stack>
        <Stack $w={66}>10:15 AM<br />8/26/2020</Stack>
        <ActionCenter viewBox="1313 728 53 40">
          <path d="M1325 740h16v12h-10l-3 3v-3h-3z" fill="#fff" />
          <path d="M1327 743.500h12M1327 746.500h12M1327 749.500h7" stroke="#1a2944" strokeWidth="1.200" />
          <circle cx="1340.500" cy="755" r="8" fill="#333b42" stroke="#777f88" />
          <text x="1340.500" y="759.500" fontSize="12.500" fontWeight="600" textAnchor="middle" fill="#fff" fontFamily={UI}>2</text>
          <path d="M1361.500 728v40" stroke="#6d7787" />
        </ActionCenter>
      </Taskbar>
    </Screen>
  );
}
